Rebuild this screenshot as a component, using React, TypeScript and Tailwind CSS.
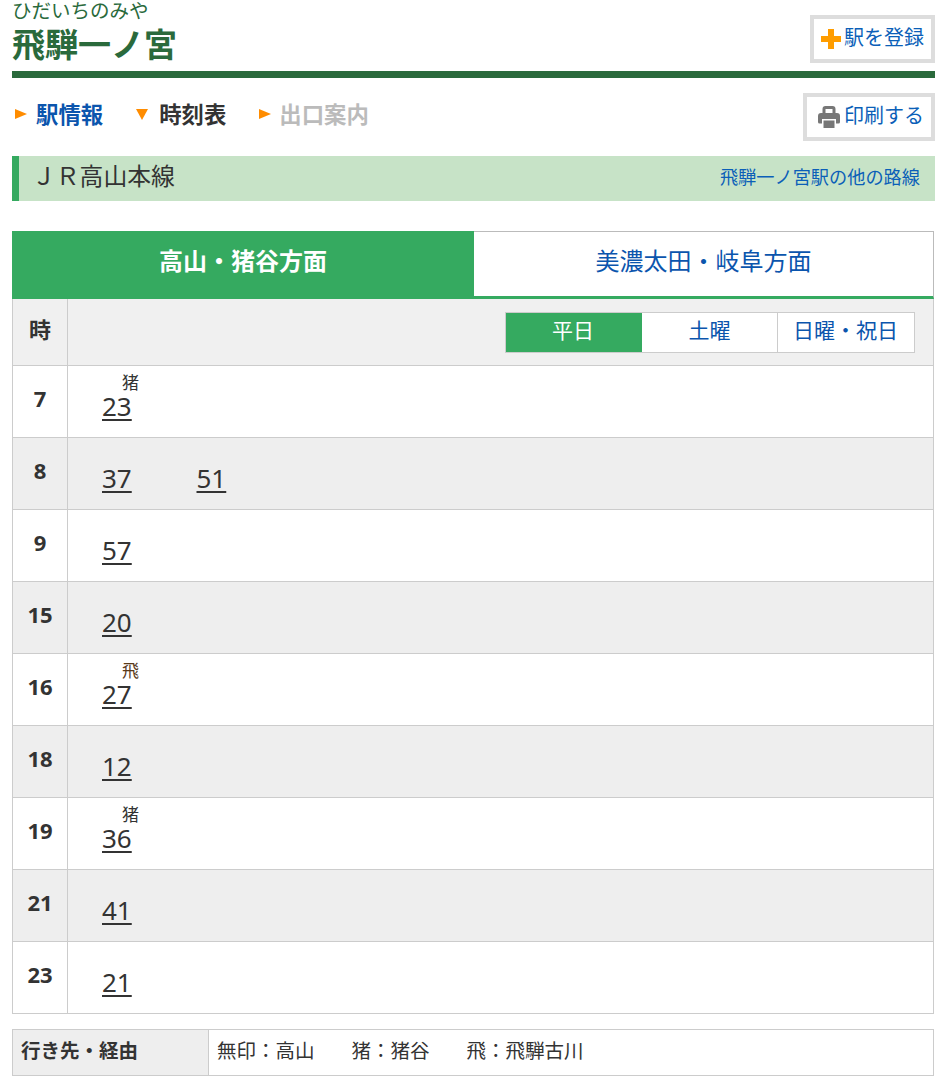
const jp = 'font-["Noto_Sans","Noto_Sans_CJK_JP",sans-serif]';

const rows = [
	{ hour: '7', times: [{ min: '23', mark: '猪' }] },
	{ hour: '8', times: [{ min: '37' }, { min: '51' }] },
	{ hour: '9', times: [{ min: '57' }] },
	{ hour: '15', times: [{ min: '20' }] },
	{ hour: '16', times: [{ min: '27', mark: '飛', brown: true }] },
	{ hour: '18', times: [{ min: '12' }] },
	{ hour: '19', times: [{ min: '36', mark: '猪' }] },
	{ hour: '21', times: [{ min: '41' }] },
	{ hour: '23', times: [{ min: '21' }] },
];

type Time = { min: string; mark?: string; brown?: boolean };

function Arrow({ down }: { down?: boolean }) {
	return (
		<svg className="h-3 w-3 shrink-0" viewBox="0 0 12 12">
			<polygon
				fill="#ff8c00"
				points={down ? '0,1 12,1 6,12' : '0,1 12,6 0,11'}
			/>
		</svg>
	);
}

function Row({ hour, times, odd }: { hour: string; times: Time[]; odd: boolean }) {
	return (
		<div
			className={`flex h-[72px] border-b border-[#cccccc] ${odd ? 'bg-[#eeeeee]' : 'bg-white'}`}
		>
			<div className="flex w-[55px] shrink-0 justify-center border-r border-[#cccccc] pt-[18px] text-[22px] leading-[28px] font-bold text-[#333333]">
				{hour}
			</div>
			<div className="flex gap-[64.5px] pl-[34px]">
				{times.map((t) => (
					<div className="flex w-[30px] flex-col" key={t.min}>
						<div
							className={`h-[24px] pt-[8px] pl-[20px] text-[17px] leading-[18px] whitespace-nowrap ${t.brown ? 'text-[#5a3a1a]' : 'text-[#333333]'}`}
						>
							{t.mark}
						</div>
						<a className="mt-[1px] text-[26px] leading-[30px] text-[#333333] underline underline-offset-[3px]">
							{t.min}
						</a>
					</div>
				))}
			</div>
		</div>
	);
}

export default function App() {
	return (
		<div className={`h-[1088px] w-[941px] overflow-hidden bg-white pr-[6px] pl-[12px] ${jp}`}>
			<header className="flex h-[78px] justify-between border-b-[7px] border-[#2a6a3c]">
				<div>
					<p className="mb-[2px] h-[21px] text-[19.5px] leading-[21px] text-[#2a6a3c]">
						ひだいちのみや
					</p>
					<h1 className="text-[33px] leading-[44px] font-bold text-[#2a6a3c]">
						飛騨一ノ宮
					</h1>
				</div>
				<a className="mt-[15px] flex h-[48px] w-[125px] items-center justify-center gap-[3px] border-4 border-[#dddddd] pb-[3px] text-[20px] text-[#0b5fb8]">
					<svg className="mt-[3px] h-[20px] w-[20px] shrink-0" viewBox="0 0 20 20">
						<path d="M7 0h6v7h7v6h-7v7H7v-7H0V7h7z" fill="#ff9d00" />
					</svg>
					駅を登録
				</a>
			</header>

			<nav className="mt-[15px] flex h-[48px] items-center justify-between">
				<div className="flex items-center pb-[5px] pl-[3px] text-[22.4px] font-bold">
					<Arrow />
					<a className="ml-[9px] text-[#0b55ad]">駅情報</a>
					<span className="ml-[33px]">
						<Arrow down />
					</span>
					<span className="ml-[11px] text-[#333333]">時刻表</span>
					<span className="ml-[33px]">
						<Arrow />
					</span>
					<span className="ml-[8px] text-[#bbbbbb]">出口案内</span>
				</div>
				<a className="flex h-[48px] w-[132px] items-center justify-center gap-[4px] border-4 border-[#dddddd] pb-[3px] pl-[4px] text-[20px] text-[#0b5fb8]">
					<svg className="mt-[3px] h-[22px] w-[22px] shrink-0" viewBox="0 0 22 22">
						<path
							d="M6 8V3a1.5 1.5 0 0 1 1.5-1.5h7A1.5 1.5 0 0 1 16 3v5"
							fill="none"
							stroke="#777777"
							strokeWidth="3"
						/>
						<path
							d="M3 7h16a3 3 0 0 1 3 3v6a1.5 1.5 0 0 1-1.5 1.5H18V13H4v4.5H1.5A1.5 1.5 0 0 1 0 16v-6a3 3 0 0 1 3-3z"
							fill="#777777"
						/>
						<path d="M5.5 14.5h11V22h-11z" fill="#777777" />
					</svg>
					印刷する
				</a>
			</nav>

			<div className="mt-[15px] flex h-[45px] items-center justify-between border-l-[7px] border-[#35aa60] bg-[#c7e3c7] pr-[15px] pl-[13px]">
				<h2 className="pb-[4px] text-[23.8px] font-normal text-[#333333]">ＪＲ高山本線</h2>
				<a className="pb-[2px] text-[18.2px] text-[#0b5fb8]">飛騨一ノ宮駅の他の路線</a>
			</div>

			<div className="mt-[30px] flex h-[68px] w-[922px]">
				<div className="flex w-[462px] items-center justify-center bg-[#35aa60] pb-[8px] text-[24px] font-bold text-white">
					高山・猪谷方面
				</div>
				<a className="flex flex-1 items-center justify-center border-t border-r border-b-[3px] border-[#bbbbbb] border-b-[#35aa60] pb-[6px] text-[24px] text-[#0b55ad]">
					美濃太田・岐阜方面
				</a>
			</div>

			<div className="w-[922px] border-x border-[#cccccc]">
				<div className="flex h-[67px] border-b border-[#cccccc] bg-[#f0f0f0]">
					<div className="flex w-[55px] shrink-0 items-center justify-center border-r border-[#cccccc] pb-[6px] text-[22px] font-bold text-[#333333]">
						時
					</div>
					<div className="flex flex-1 justify-end pt-[13px] pr-[18px]">
						<div className="flex h-[41px] border border-[#cccccc] bg-white text-[21px] text-[#0b55ad]">
							<span className="flex w-[136px] items-center justify-center bg-[#35aa60] pr-[2px] pb-[3px] text-white">
								平日
							</span>
							<a className="flex w-[136px] items-center justify-center border-r border-[#cccccc] pb-[3px]">
								土曜
							</a>
							<a className="flex w-[136px] items-center justify-center pr-[1px] pb-[3px]">
								日曜・祝日
							</a>
						</div>
					</div>
				</div>
				{rows.map((r, i) => (
					<Row hour={r.hour} key={r.hour} odd={i % 2 === 1} times={r.times} />
				))}
			</div>

			<div className="mt-[15px] flex h-[47px] w-[922px] border border-[#cccccc]">
				<div className="flex w-[196px] items-center border-r border-[#cccccc] bg-[#eeeeee] pb-[3px] pl-[8px] text-[19.5px] font-bold text-[#333333]">
					行き先・経由
				</div>
				<div className="flex items-center gap-[37px] pb-[3px] pl-[8px] text-[19.5px] text-[#333333]">
					<span>無印：高山</span>
					<span>猪：猪谷</span>
					<span>飛：飛騨古川</span>
				</div>
			</div>
		</div>
	);
}
